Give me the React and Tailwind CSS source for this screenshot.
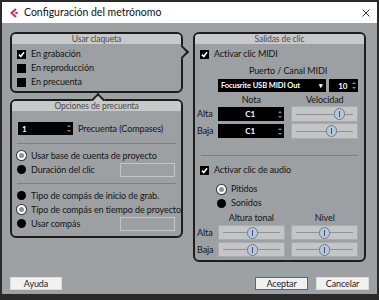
import React from "react";

const font = { fontFamily: "Lato, 'Noto Sans', sans-serif" };

const Check = ({ checked }) => (
  <span className="w-[9px] h-[9px] bg-black flex items-center justify-center shrink-0">
    {checked && (
      <svg width="7" height="7" viewBox="0 0 7 7">
        <path d="M1 3.6 L2.8 5.5 L6 1.3" stroke="white" strokeWidth="1.6" fill="none" />
      </svg>
    )}
  </span>
);

const Radio = ({ on }) =>
  on ? (
    <span className="w-[9px] h-[9px] rounded-full border-2 border-white bg-[#8d8f92] ring-1 ring-[#3a3a3a] shrink-0" />
  ) : (
    <span className="w-[9px] h-[9px] rounded-full bg-black shrink-0" />
  );

const Spin = () => (
  <svg width="4" height="9" viewBox="0 0 4 9" className="shrink-0">
    <path d="M0 3 L2 1 L4 3 Z M0 6 L2 8 L4 6 Z" fill="#8a8a8a" />
  </svg>
);

const BlackBox = ({ children, className = "", center }) => (
  <div
    className={`bg-black text-white font-bold text-[8px] flex items-center pl-[4px] pr-[2px] ${className}`}
  >
    <span className={center ? "flex-1 text-center" : "flex-1"}>{children}</span>
    <Spin />
  </div>
);

const Slider = ({ pos, className = "" }) => (
  <div
    className={`relative bg-[#c3c5c7] border border-[#a9abad] flex items-center px-[4px] ${className}`}
  >
    <div className="h-[1px] w-full bg-[#8e9094]" />
    <span
      className="absolute top-1/2 -translate-y-1/2 w-[11px] h-[12px] rounded-full bg-[#b9c7d8] border border-[#6a7d96] flex justify-center items-center"
      style={{ left: pos }}
    >
      <span className="w-[1px] h-[6px] bg-[#3d4f6a]" />
    </span>
  </div>
);

const Panel = ({ title, className = "", children }) => (
  <div className={`relative rounded-[6px] border-2 border-[#1d1d1d] bg-[#9da0a3] ${className}`}>
    <div className="relative z-10 h-[10px] bg-[#c7c9cb] rounded-t-[4px] text-[8.5px] leading-[10px] text-center text-[#4a4a4a]">
      {title}
    </div>
    {children}
  </div>
);

const Row = ({ children, className = "" }) => (
  <div className={`flex items-center gap-[5px] whitespace-nowrap ${className}`}>{children}</div>
);

const EmptyBox = () => (
  <div className="ml-auto w-[55px] h-[14px] border border-[#c2c4c6] bg-[#9da0a3]" />
);

const Button = ({ children, focused, className = "" }) => (
  <button
    className={`h-[13px] bg-[#f1f1f1] text-[9px] leading-[11px] text-[#222] ${
      focused ? "border border-[#2c6fc9]" : "border border-[#dcdcdc]"
    } ${className}`}
  >
    {children}
  </button>
);

export default function App() {
  return (
    <div
      className="w-[379px] h-[300px] bg-[#2a2a2a] pt-[2px] px-[2px] text-[#151515] text-[9px] tracking-[-0.1px]"
      style={font}
    >
      <div className="h-[292px] bg-[#9ea1a4] flex flex-col">
        {/* title bar */}
        <div className="h-[21px] bg-white flex items-center pl-[8px] pr-[7px] shrink-0 tracking-normal">
          <svg width="9" height="10" viewBox="0 0 9 10">
            <path d="M6 1 L1.5 5 L6 9" stroke="#c8324e" strokeWidth="2" fill="none" />
            <circle cx="6.5" cy="5" r="1.3" fill="#c8324e" />
          </svg>
          <span className="ml-[5px] text-[10.5px] text-[#111]">Configuración del metrónomo</span>
          <svg width="8" height="8" viewBox="0 0 8 8" className="ml-auto">
            <path d="M0.5 0.5 L7.5 7.5 M7.5 0.5 L0.5 7.5" stroke="#333" strokeWidth="1" />
          </svg>
        </div>

        <div className="flex-1 flex flex-col pl-[8px] pt-[9px]">
          <div className="flex gap-[10px]">
            {/* left column */}
            <div className="w-[173px] flex flex-col gap-[6px]">
              <Panel title="Usar claqueta" className="h-[61px]">
                <span className="absolute right-[-6px] top-[13px] w-[10px] h-[10px] rotate-45 border-t-2 border-r-2 border-[#1d1d1d] bg-[#9da0a3]" />
                <div className="flex flex-col pl-[5px] pt-[3px] relative">
                  <Row className="h-[14px]">
                    <Check checked />
                    <span>En grabación</span>
                  </Row>
                  <Row className="h-[14px]">
                    <Check />
                    <span>En reproducción</span>
                  </Row>
                  <Row className="h-[14px]">
                    <Check />
                    <span>En precuenta</span>
                  </Row>
                </div>
              </Panel>

              <Panel title="Opciones de precuenta" className="h-[139px]">
                <span className="absolute left-[81px] top-[-6px] w-[10px] h-[10px] rotate-45 border-t-2 border-l-2 border-[#1d1d1d] bg-[#c7c9cb]" />
                <div className="relative flex flex-col px-[4px]">
                  <div className="flex items-center gap-[5px] mt-[11px] ml-[2px] whitespace-nowrap">
                    <BlackBox className="w-[55px] h-[13px]">1</BlackBox>
                    <span>Precuenta (Compases)</span>
                  </div>
                  <div className="h-[1px] bg-[#7d8083] mt-[7px] mx-[1px]" />
                  <Row className="h-[14px] mt-[5px] pl-[1px]">
                    <Radio on />
                    <span>Usar base de cuenta de proyecto</span>
                  </Row>
                  <Row className="h-[14px] pl-[1px] pr-[2px]">
                    <Radio />
                    <span>Duración del clic</span>
                    <EmptyBox />
                  </Row>
                  <div className="h-[1px] bg-[#7d8083] mt-[6px] mx-[1px]" />
                  <Row className="h-[14px] mt-[5px] pl-[1px]">
                    <Radio />
                    <span>Tipo de compás de inicio de grab.</span>
                  </Row>
                  <Row className="h-[14px] pl-[1px]">
                    <Radio on />
                    <span>Tipo de compás en tiempo de proyecto</span>
                  </Row>
                  <Row className="h-[14px] pl-[1px] pr-[2px]">
                    <Radio />
                    <span>Usar compás</span>
                    <EmptyBox />
                  </Row>
                </div>
              </Panel>
            </div>

            {/* right panel */}
            <Panel title="Salidas de clic" className="w-[173px] h-[230px]">
              <div className="flex flex-col pl-[2px] pr-[6px] whitespace-nowrap">
                <Row className="h-[14px] mt-[3px] pl-[3px]">
                  <Check checked />
                  <span>Activar clic MIDI</span>
                </Row>
                <div className="h-[12px] mt-[4px] pl-[21px] text-center leading-[12px]">
                  Puerto / Canal MIDI
                </div>
                <div className="flex gap-[3px] pl-[21px] mt-[2px]">
                  <div className="w-[110px] h-[13px] bg-black text-white font-bold text-[7.5px] flex items-center pl-[3px] pr-[3px]">
                    <span className="flex-1">Focusrite USB MIDI Out</span>
                    <span className="text-[7px]">▾</span>
                  </div>
                  <BlackBox className="w-[29px] h-[13px]" center>
                    10
                  </BlackBox>
                </div>
                <div className="flex h-[13px] items-center pl-[21px] mt-[1px]">
                  <span className="w-[67px] text-center">Nota</span>
                  <span className="w-[67px] ml-[7px] text-center">Velocidad</span>
                </div>
                <div className="flex items-center h-[16px]">
                  <span className="w-[21px]">Alta</span>
                  <BlackBox className="w-[67px] h-[14px]" center>
                    C1
                  </BlackBox>
                  <Slider pos="42px" className="ml-[7px] w-[67px] h-[16px]" />
                </div>
                <div className="flex items-center h-[16px] mt-[1px]">
                  <span className="w-[21px]">Baja</span>
                  <BlackBox className="w-[67px] h-[14px]" center>
                    C1
                  </BlackBox>
                  <Slider pos="34px" className="ml-[7px] w-[67px] h-[16px]" />
                </div>
                <div className="h-[1px] bg-[#7d8083] mt-[16px] ml-[4px]" />
                <Row className="h-[14px] mt-[7px] pl-[3px]">
                  <Check checked />
                  <span>Activar clic de audio</span>
                </Row>
                <Row className="h-[14px] mt-[5px] pl-[20px]">
                  <Radio on />
                  <span>Pitidos</span>
                </Row>
                <Row className="h-[14px] pl-[20px]">
                  <Radio />
                  <span>Sonidos</span>
                </Row>
                <div className="flex h-[13px] items-center pl-[21px] mt-[1px]">
                  <span className="w-[67px] text-center">Altura tonal</span>
                  <span className="w-[67px] ml-[7px] text-center">Nivel</span>
                </div>
                <div className="flex items-center h-[15px] mt-[1px]">
                  <span className="w-[21px]">Alta</span>
                  <Slider pos="28px" className="w-[68px] h-[15px]" />
                  <Slider pos="27px" className="ml-[6px] w-[67px] h-[15px]" />
                </div>
                <div className="flex items-center h-[15px] mt-[2px]">
                  <span className="w-[21px]">Baja</span>
                  <Slider pos="28px" className="w-[68px] h-[15px]" />
                  <Slider pos="27px" className="ml-[6px] w-[67px] h-[15px]" />
                </div>
              </div>
            </Panel>
          </div>

          {/* footer */}
          <div className="flex items-center mt-[15px] pr-[8px]">
            <Button className="w-[52px]">Ayuda</Button>
            <Button focused className="w-[53px] ml-auto">
              Aceptar
            </Button>
            <Button className="w-[53px] ml-[8px]">Cancelar</Button>
          </div>
        </div>
      </div>
    </div>
  );
}
